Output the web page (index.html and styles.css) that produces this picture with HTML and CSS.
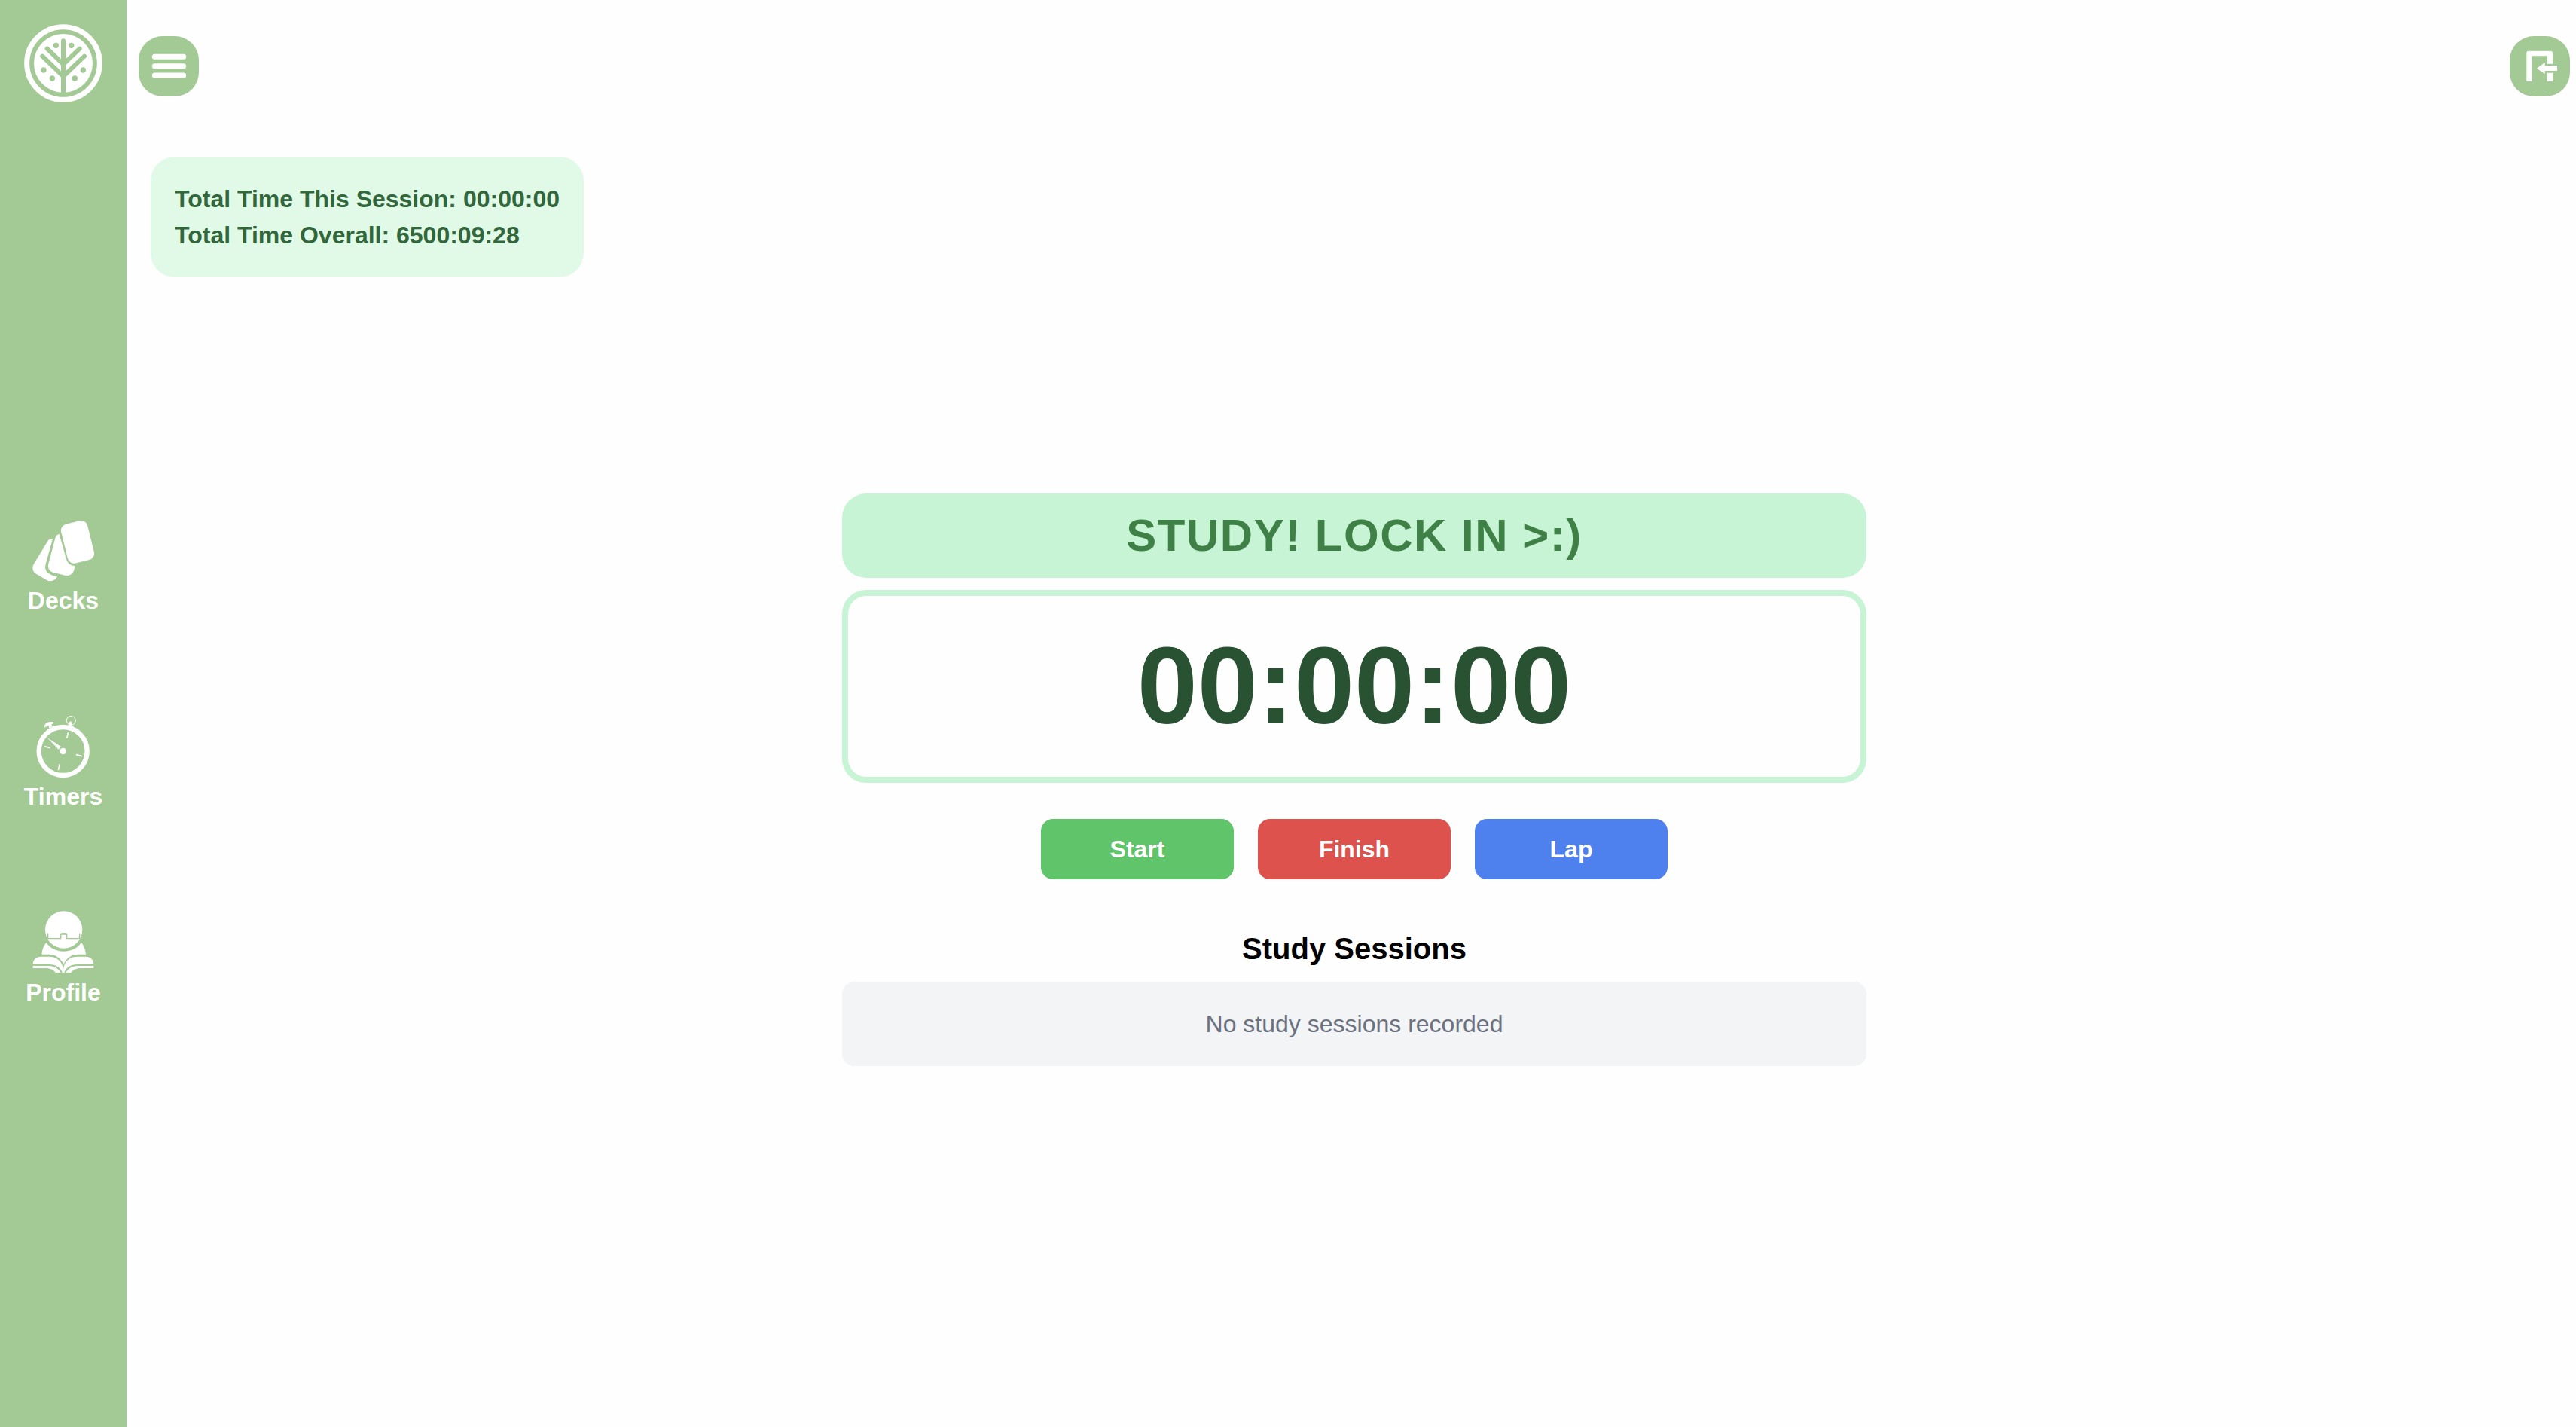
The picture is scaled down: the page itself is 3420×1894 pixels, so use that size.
FILE: index.html
```html
<!DOCTYPE html>
<html lang="en">
<head>
  <meta charset="utf-8">
  <meta name="viewport" content="width=device-width, initial-scale=1">
  <title>Study Timer</title>
  <link rel="stylesheet" href="styles.css">
</head>
<body>
  <div class="app">
    <aside class="sidebar">
      <a class="logo" href="#home" aria-label="Home">
        <svg class="logo-art" viewBox="96 96 312 312" aria-hidden="true">
          <circle class="line-white" cx="252" cy="252" r="145" stroke-width="21"/>
          <circle class="fill-white" cx="252" cy="252" r="117"/>
          <g class="line-green" stroke-width="18" stroke-linecap="round">
            <path d="M252 163V376"/>
            <path d="M188 194L252 256L317 194"/>
            <path d="M169 224L252 304L336 224"/>
          </g>
          <g class="fill-green">
            <circle cx="223" cy="181" r="11"/><circle cx="284" cy="181" r="11"/>
            <circle cx="174" cy="279" r="11"/><circle cx="331" cy="279" r="11"/>
            <circle cx="208" cy="312" r="11"/><circle cx="298" cy="312" r="11"/>
          </g>
        </svg>
      </a>
      <nav class="nav" aria-label="Main">
        <a class="nav-item" href="#decks">
          <svg class="nav-icon" viewBox="126 57 252 252" aria-hidden="true">
            <g class="fill-white">
              <rect x="255" y="68" width="108" height="160" rx="26" transform="rotate(-14 309 148)"/>
              <path d="M236 117C228 118 223 124 220 133L193 235C189 252 197 264 211 269L259 281C281 286 297 270 298 243C281 243 269 233 264 216Z"/>
              <path d="M210 135C200 134 194 138 189 146L134 237C126 252 130 265 142 274L186 300C203 309 219 302 228 286C194 280 174 264 182 236Z"/>
            </g>
          </svg>
          <span>Decks</span>
        </a>
        <a class="nav-item" href="#timers">
          <svg class="nav-icon" viewBox="126 57 252 252" aria-hidden="true">
            <circle class="line-white" cx="251" cy="201" r="96" stroke-width="19"/>
            <g class="fill-white">
              <circle cx="251" cy="201" r="13"/>
              <path d="M188 147L244 184C239 187 236 190 234 195Z"/>
              <path d="M178 107C174 92 189 80 212 85C215 90 211 95 204 94L209 103L196 110L193 100C187 99 184 106 178 107Z"/>
              <path d="M275 86C278 81 284 81 287 86C289 91 286 94 286 100L273 98C274 93 272 90 275 86Z"/>
            </g>
            <circle class="line-white" cx="283" cy="79" r="18" stroke-width="3"/>
            <path class="line-white" stroke-width="5" d="M272 126L266 149M177 182L200 188M303 215L326 221M238 252L232 276"/>
          </svg>
          <span>Timers</span>
        </a>
        <a class="nav-item" href="#profile">
          <svg class="nav-icon" viewBox="126 57 252 252" aria-hidden="true">
            <g class="fill-white">
              <circle cx="254" cy="132" r="74"/>
              <path d="M184 183C199 205 224 218 254 218C284 218 309 205 324 183C334 195 340 210 342 230H310C280 230 264 248 253 270C242 248 226 230 196 230H166C168 210 174 195 184 183Z"/>
              <path d="M131 270C131 250 146 239 165 239H195C230 239 251 264 252 292C253 264 274 239 309 239H339C358 239 373 250 373 270H309C280 270 262 284 256 303H248C242 284 224 270 195 270Z"/>
              <path d="M131 276H195C218 276 234 288 242 303H222C213 292 200 285 182 285H131Z"/>
              <path d="M373 276H309C286 276 270 288 262 303H282C291 292 304 285 322 285H373Z"/>
            </g>
            <path class="line-green" stroke-width="4" d="M191 146V167H242V150H266V167H317V146"/>
            <path class="line-green" stroke-width="3" d="M242 147Q254 143 266 147"/>
          </svg>
          <span>Profile</span>
        </a>
      </nav>
    </aside>

    <div class="content">
      <header class="topbar">
        <button class="icon-button" type="button" aria-label="Menu">
          <svg viewBox="552 144 240 240" aria-hidden="true">
            <path class="line-white" stroke-width="21" stroke-linecap="round" d="M616 226H731M616 263H731M616 300H731"/>
          </svg>
        </button>
        <button class="icon-button" type="button" aria-label="Log out">
          <svg viewBox="96 84 240 240" aria-hidden="true">
            <path class="fill-white" d="M163 264V151Q163 143 171 143H259Q267 143 267 151V194H246V163H184V264ZM246 230H267V264H246ZM204 212L236 189V201H285V222H236V235Z"/>
          </svg>
        </button>
      </header>

      <main class="workspace">
        <section class="totals" aria-label="Totals">
          <p>Total Time This Session: 00:00:00</p>
          <p>Total Time Overall: 6500:09:28</p>
        </section>

        <section class="timer" aria-label="Study timer">
          <h1 class="banner">STUDY! LOCK IN &gt;:)</h1>
          <div class="clock" role="timer">00:00:00</div>
          <div class="actions">
            <button class="action action-start" type="button">Start</button>
            <button class="action action-finish" type="button">Finish</button>
            <button class="action action-lap" type="button">Lap</button>
          </div>
          <h2 class="sessions-title">Study Sessions</h2>
          <p class="sessions-empty">No study sessions recorded</p>
        </section>
      </main>
    </div>
  </div>
</body>
</html>
```
FILE: styles.css
```css
:root {
  --sage: #a3c995;
  --mint: #c7f4d4;
  --page: #fefefe;
}

* {
  box-sizing: border-box;
}

body,
h1,
h2,
p {
  margin: 0;
}

body {
  background: var(--page);
  color: #000;
  font-family: "Liberation Sans", Arial, Helvetica, sans-serif;
  font-size: 32px;
  line-height: 48px;
}

button {
  border: 0;
  font: inherit;
  cursor: pointer;
}

svg {
  display: block;
}

.fill-white { fill: #fff; }
.fill-green { fill: var(--sage); }
.line-white { fill: none; stroke: #fff; }
.line-green { fill: none; stroke: var(--sage); }

.app {
  display: flex;
  min-height: 100vh;
}

/* Sidebar */
.sidebar {
  display: flex;
  flex: none;
  flex-direction: column;
  align-items: center;
  width: 168px;
  padding-top: 32px;
  background: var(--sage);
}

.logo-art {
  width: 104px;
  height: 104px;
}

.nav {
  display: flex;
  flex: 1;
  flex-direction: column;
  justify-content: center;
  gap: 128px;
}

.nav-item {
  display: flex;
  flex-direction: column;
  align-items: center;
  color: #fff;
  font-weight: 700;
  text-decoration: none;
}

.nav-icon {
  width: 84px;
  height: 84px;
}

/* Content */
.content {
  display: flex;
  flex: 1;
  flex-direction: column;
  min-width: 0;
}

.topbar {
  display: flex;
  justify-content: space-between;
  padding: 48px 8px 48px 16px;
}

.icon-button {
  width: 80px;
  height: 80px;
  padding: 0;
  border-radius: 32px;
  background: var(--sage);
}

/* The totals card and the centred timer share one grid cell. */
.workspace {
  display: grid;
  flex: 1;
  padding-left: 8px;
}

.totals,
.timer {
  grid-area: 1 / 1;
}

.totals {
  place-self: start;
  margin: 32px 24px;
  padding: 32px;
  border-radius: 32px;
  background: #e1fae8;
  color: #32673b;
  font-weight: 700;
}

.timer {
  place-self: center;
  width: 100%;
  max-width: 1360px;
  text-align: center;
}

.banner {
  padding: 16px;
  border-radius: 32px;
  background: var(--mint);
  color: #3e8046;
  font-size: 60px;
  line-height: 80px;
  letter-spacing: 0.025em;
}

.clock {
  margin-top: 16px;
  padding: 48px;
  border: 8px solid var(--mint);
  border-radius: 32px;
  color: #295232;
  font-size: 144px;
  font-weight: 700;
  line-height: 144px;
}

.actions {
  display: flex;
  justify-content: center;
  gap: 32px;
  margin-top: 48px;
}

.action {
  width: 256px;
  padding: 16px;
  border-radius: 16px;
  color: #fff;
  font-weight: 700;
}

.action-start { background: #5fc46a; }
.action-finish { background: #dd524d; }
.action-lap { background: #4f81ee; }

.sessions-title {
  margin-top: 64px;
  font-size: 40px;
  line-height: 56px;
}

.sessions-empty {
  margin-top: 16px;
  padding: 32px;
  border-radius: 16px;
  background: #f3f4f6;
  color: #6c7180;
}
```
